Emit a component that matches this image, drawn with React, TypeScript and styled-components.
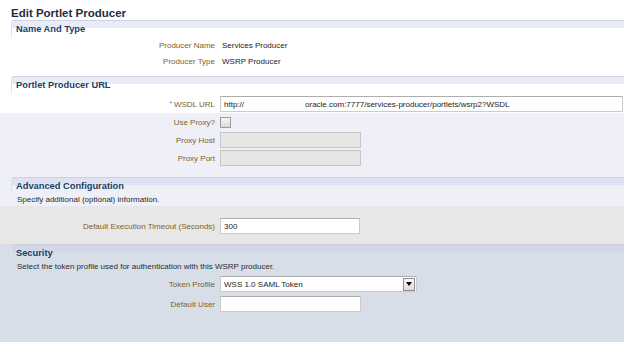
import styled, { createGlobalStyle } from 'styled-components';

const GlobalStyle = createGlobalStyle`
  html, body {
    margin: 0;
    padding: 0;
    background: #ffffff;
  }
  body {
    font-family: "Liberation Sans", Arial, sans-serif;
  }
`;

const App = () => {
    return (
        <>
            <GlobalStyle />
            <Page>
                <PageTitle>Edit Portlet Producer</PageTitle>

                <Section $bg="#ffffff">
                    <SectionHeader>Name And Type</SectionHeader>
                    <FieldGroup $row={16} $pad="0 0 7px">
                        <Label>Producer Name</Label>
                        <Value>Services Producer</Value>
                        <Label>Producer Type</Label>
                        <Value>WSRP Producer</Value>
                    </FieldGroup>
                </Section>

                <Section $bg="#ffffff">
                    <SectionHeader>Portlet Producer URL</SectionHeader>
                    <FieldGroup $pad="2px 0 0">
                        <Label>
                            <Star>*</Star>WSDL URL
                        </Label>
                        <UrlBox>
                            <span>http://</span>
                            <Redacted />
                            <span>oracle.com:7777/services-producer/portlets/wsrp2?WSDL</span>
                        </UrlBox>
                    </FieldGroup>
                    <FieldGroup $bg="#eeeff7" $pad="0 0 10px">
                        <Label>Use Proxy?</Label>
                        <CheckBox />
                        <Label>Proxy Host</Label>
                        <TextInput $w={141} disabled />
                        <Label>Proxy Port</Label>
                        <TextInput $w={141} disabled />
                    </FieldGroup>
                </Section>

                <Section $bg="#eeeff7">
                    <SectionHeader>Advanced Configuration</SectionHeader>
                    <Description>Specify additional (optional) information.</Description>
                    <FieldGroup $bg="#e7e7e7" $pad="11px 0 9px">
                        <Label>Default Execution Timeout (Seconds)</Label>
                        <TextInput $w={140} defaultValue="300" />
                    </FieldGroup>
                </Section>

                <Section $bg="#d7dee7" $grow>
                    <SectionHeader>Security</SectionHeader>
                    <Description>Select the token profile used for authentication with this WSRP producer.</Description>
                    <FieldGroup $row={20} $pad="1px 0 0">
                        <Label>Token Profile</Label>
                        <SelectBox>
                            <SelectText>WSS 1.0 SAML Token</SelectText>
                            <DropButton>
                                <svg width="6" height="4" viewBox="0 0 6 4">
                                    <polygon points="0,0 6,0 3,4" fill="#000" />
                                </svg>
                            </DropButton>
                        </SelectBox>
                        <Label>Default User</Label>
                        <TextInput $w={141} />
                    </FieldGroup>
                </Section>
            </Page>
        </>
    );
};

const Page = styled.div`
    width: 624px;
    min-height: 342px;
    display: flex;
    flex-direction: column;
`;

const PageTitle = styled.h1`
    margin: 0;
    height: 20px;
    box-sizing: border-box;
    padding: 5px 0 0 11px;
    font-size: 11.5px;
    line-height: 16px;
    font-weight: bold;
    color: #1b2d45;
`;

const Section = styled.section<{ $bg: string; $grow?: boolean }>`
    background: ${(p) => p.$bg};
    flex: ${(p) => (p.$grow ? 1 : 'none')};
`;

const SectionHeader = styled.h2`
    margin: 0 0 0 11px;
    padding-left: 4px;
    border-top: 1px solid #cdd2de;
    border-left: 1px solid #e0e3ec;
    border-top-left-radius: 3px;
    background: linear-gradient(rgba(200, 206, 232, 0.4) 0 7px, transparent 7px);
    font-size: 9.3px;
    line-height: 16px;
    font-weight: bold;
    color: #163f67;
`;

const Description = styled.p`
    margin: 0;
    padding-left: 17px;
    font-size: 8px;
    line-height: 12px;
    color: #2b2b2b;
`;

const FieldGroup = styled.div<{ $bg?: string; $pad?: string; $row?: number }>`
    display: grid;
    grid-template-columns: 215px 1fr;
    column-gap: 5px;
    grid-auto-rows: ${(p) => p.$row ?? 18}px;
    align-items: center;
    padding: ${(p) => p.$pad ?? '0'};
    background: ${(p) => p.$bg ?? 'transparent'};
`;

const Label = styled.label`
    text-align: right;
    font-size: 8px;
    color: #80622b;
    white-space: nowrap;
`;

const Star = styled.span`
    color: #3f8ccc;
    font-size: 7px;
    margin-right: 2px;
    vertical-align: 1px;
`;

const Value = styled.div`
    font-size: 8px;
    color: #222222;
    padding-left: 2px;
`;

const TextInput = styled.input<{ $w: number }>`
    width: ${(p) => p.$w}px;
    height: 16px;
    box-sizing: border-box;
    margin: 0;
    padding: 0 3px;
    border: 1px solid #cbcbcb;
    border-top-color: #aeaeae;
    border-radius: 0;
    background: #ffffff;
    font-family: "Liberation Sans", Arial, sans-serif;
    font-size: 8px;
    color: #222222;
    outline: none;

    &:disabled {
        background: #e6e6e6;
        border-color: #c6c6c6;
    }
`;

const UrlBox = styled.div`
    height: 16px;
    box-sizing: border-box;
    margin-right: 1px;
    padding: 0 3px;
    display: flex;
    align-items: center;
    border: 1px solid #cbcbcb;
    border-top-color: #aeaeae;
    background: #ffffff;
    font-size: 8px;
    color: #222222;
    white-space: nowrap;
    overflow: hidden;
`;

const Redacted = styled.span`
    display: inline-block;
    width: 61px;
`;

const CheckBox = styled.span`
    width: 11px;
    height: 11px;
    box-sizing: border-box;
    border: 1px solid #9d9d9d;
    background: linear-gradient(#f7f7f7, #dadada);
`;

const SelectBox = styled.div`
    width: 197px;
    height: 16px;
    box-sizing: border-box;
    display: flex;
    align-items: center;
    justify-content: space-between;
    border: 1px solid #cbcbcb;
    border-top-color: #aeaeae;
    background: #ffffff;
`;

const SelectText = styled.span`
    padding-left: 3px;
    font-size: 8px;
    color: #222222;
`;

const DropButton = styled.span`
    width: 12px;
    height: 13px;
    box-sizing: border-box;
    margin-right: 1px;
    display: flex;
    align-items: center;
    justify-content: center;
    border: 1px solid #8d8d8d;
    background: linear-gradient(#fafafa, #dcdcdc);
`;

export default App;
